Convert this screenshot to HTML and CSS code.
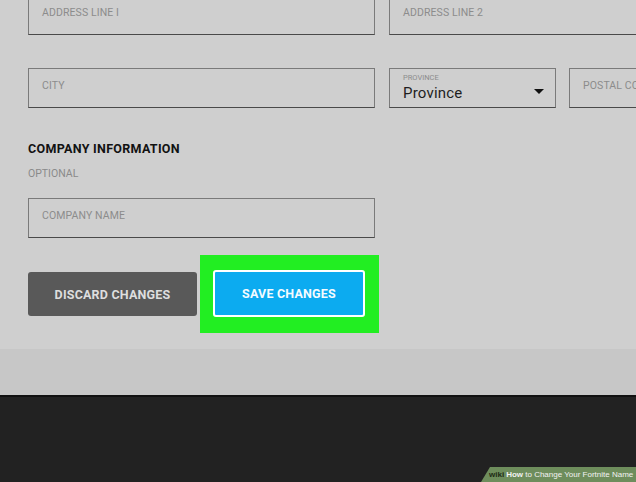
FILE: index.html
```html
<!DOCTYPE html>
<html lang="en">
<head>
    <meta charset="UTF-8">
    <title>Account - Address</title>
    <link rel="stylesheet" href="styles.css">
</head>
<body>
    <div class="form-area">
        <div class="row row-top">
            <div class="field wide"><span class="placeholder">ADDRESS LINE I</span></div>
            <div class="field wide"><span class="placeholder">ADDRESS LINE 2</span></div>
        </div>

        <div class="row">
            <div class="field wide"><span class="placeholder">CITY</span></div>
            <div class="field select">
                <span class="small-label">PROVINCE</span>
                <span class="value">Province</span>
                <span class="arrow"></span>
            </div>
            <div class="field postal"><span class="placeholder">POSTAL CO</span></div>
        </div>

        <h2 class="section-title">COMPANY INFORMATION</h2>
        <p class="optional">OPTIONAL</p>

        <div class="row">
            <div class="field wide"><span class="placeholder">COMPANY NAME</span></div>
        </div>

        <div class="actions">
            <button class="btn btn-discard">DISCARD CHANGES</button>
            <div class="highlight">
                <button class="btn btn-save">SAVE CHANGES</button>
            </div>
        </div>
    </div>

    <div class="band"></div>
    <div class="footer"></div>

    <!-- marca de agua -->
    <div class="wiki-badge"><b class="wiki">wiki</b><b>How</b> to Change Your Fortnite Name</div>
</body>
</html>
```

FILE: styles.css
```css
body {
    margin: 0;
    width: 636px;
    height: 482px;
    overflow: hidden;
    background-color: #cfcfcf;
    font-family: Roboto, "Liberation Sans", sans-serif;
    position: relative;
}
.form-area {
    padding-left: 28px;
    height: 349px;
    overflow: hidden;
}
.row {
    display: flex;
    gap: 14px;
    white-space: nowrap;
}
.row-top {
    margin-top: -5px;
    margin-bottom: 33px;
}
.field {
    box-sizing: border-box;
    height: 40px;
    border: 1px solid #7a7a7a;
    border-bottom-color: #4a4a4a;
    display: flex;
    align-items: center;
    padding-left: 13px;
    padding-bottom: 6px;
    flex-shrink: 0;
    position: relative;
    overflow: hidden;
}
.field.wide {
    width: 347px;
}
.field.select {
    width: 167px;
    display: block;
    padding-bottom: 0;
}
.field.postal {
    width: 170px;
    margin-left: -1px;
}
.placeholder {
    font-size: 10.5px;
    color: #8c8c8c;
    letter-spacing: 0.1px;
}
.small-label {
    display: block;
    font-size: 7.5px;
    color: #8c8c8c;
    margin-top: 4px;
}
.value {
    display: block;
    font-size: 15px;
    color: #1e1e1e;
    margin-top: 2px;
    letter-spacing: 0.2px;
}
.arrow {
    position: absolute;
    right: 11px;
    top: 20px;
    width: 0;
    height: 0;
    border-left: 5px solid transparent;
    border-right: 5px solid transparent;
    border-top: 5px solid #111;
}
.section-title {
    margin: 33px 0 0 0;
    font-size: 12.5px;
    font-weight: bold;
    color: #121212;
    letter-spacing: 0.3px;
}
.optional {
    margin: 11px 0 18px 0;
    font-size: 10.5px;
    color: #8a8a8a;
}
.actions {
    display: flex;
    align-items: center;
    margin-top: 17px;
}
.btn {
    box-sizing: border-box;
    border: none;
    font-family: Roboto, "Liberation Sans", sans-serif;
    font-weight: bold;
    font-size: 12.5px;
    letter-spacing: 0.2px;
    cursor: pointer;
}
.btn-discard {
    width: 169px;
    height: 44px;
    background-color: #595959;
    color: #dedede;
    border-radius: 3px;
}
.highlight {
    margin-left: 3px;
    width: 179px;
    height: 78px;
    box-sizing: border-box;
    padding: 15px 14px 16px 13px;
    background-color: #22ee22;
}
.btn-save {
    width: 152px;
    height: 47px;
    background-color: #0cabf0;
    color: #f4fbff;
    border: 2px solid #ffffff;
    border-radius: 3px;
}
.band {
    height: 46px;
    background-color: #c7c7c7;
    border-bottom: 2px solid #111;
}
.footer {
    height: 85px;
    background-color: #222222;
}
.wiki-badge {
    position: absolute;
    right: 0;
    bottom: 0;
    height: 15px;
    width: 155px;
    box-sizing: border-box;
    padding-left: 8px;
    background-color: #6e8d5c;
    clip-path: polygon(9px 0, 100% 0, 100% 100%, 0 100%);
    font-family: "Liberation Sans", Arial, sans-serif;
    font-size: 8px;
    line-height: 15px;
    color: #f2f2f2;
    white-space: nowrap;
    letter-spacing: 0;
}
.wiki {
    color: #1d2a14;
    margin-right: 2px;
}
```
